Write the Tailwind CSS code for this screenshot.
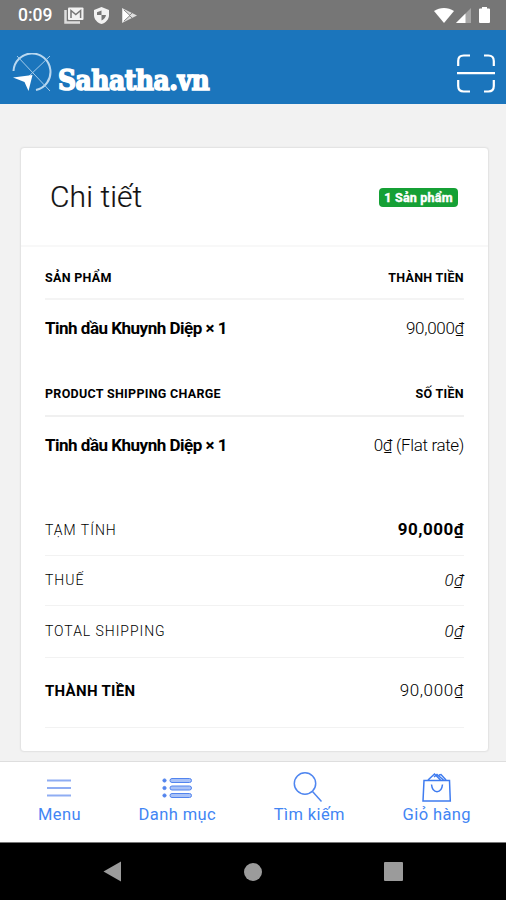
<!DOCTYPE html>
<html lang="vi">
<head>
    <meta charset="UTF-8">
    <meta name="viewport" content="width=device-width, initial-scale=1.0">
    <title>Sahatha.vn</title>
    <script src="https://cdn.jsdelivr.net/npm/@tailwindcss/browser@4"></script>
</head>
<body class="bg-[#f2f2f2] font-['Roboto',sans-serif] text-black h-[900px] flex flex-col overflow-hidden">
    <!-- Status bar -->
    <div class="h-[30px] shrink-0 bg-[#767676] flex items-center justify-between pl-[18px] pr-4 text-white">
        <div class="flex items-center">
            <span class="w-[34px] text-[17.5px] font-medium leading-none pt-[2px] whitespace-nowrap">0:09</span>
            <svg class="ml-3 w-5 h-[17px]" viewBox="0 0 20 17" fill="none">
                <path d="M1.5 3v12.5H16" stroke="#ddd" stroke-width="2.5"/>
                <rect x="4" y="0.5" width="15.5" height="12.5" rx="1" fill="#f2f2f2"/>
                <path d="M7 11V3.5l4.8 4 4.8-4V11" stroke="#767676" stroke-width="1.5"/>
            </svg>
            <svg class="ml-[10px] w-[15px] h-[17px]" viewBox="0 0 15 17">
                <path d="M7.5 0 15 3v5c0 4.300-3 7.700-7.500 9C3 15.700 0 12.300 0 8V3z" fill="#f2f2f2"/>
                <path d="M7.500 3.500V8H3V5.200zM7.500 8H12c-.3 2.500-2 4.500-4.500 5.500z" fill="#767676"/>
            </svg>
            <svg class="ml-[13px] w-[15px] h-[15px]" viewBox="0 0 15 15">
                <path d="M0 0 15 7.500 0 15z" fill="#ddd"/>
                <path d="M1 1.500 7.500 7.500 1 13.500z" fill="#fff"/>
                <path d="M2 2 8 7.500 2 13M10 5 7.500 7.500 10 10" stroke="#888" stroke-width="1" fill="none"/>
            </svg>
        </div>
        <div class="flex items-center">
            <svg class="w-5 h-[15px]" viewBox="0 0 20 15"><path d="M0 3C6-1 14-1 20 3L10 15z" fill="#fff"/></svg>
            <svg class="ml-[2px] w-[15px] h-[15px]" viewBox="0 0 15 15">
                <path d="M15 0v15H0z" fill="#a5a5a5"/>
                <path d="M9.500 5.500V15H0z" fill="#fff"/>
            </svg>
            <svg class="ml-2 w-[11px] h-4" viewBox="0 0 11 16"><path d="M3 0h5v1.500h2q1 0 1 1V15q0 1-1 1H1q-1 0-1-1V2.500q0-1 1-1h2z" fill="#fff"/></svg>
        </div>
    </div>

    <!-- Header -->
    <header class="h-[74px] shrink-0 bg-[#1b75bc] flex items-start justify-between pl-3 pr-[11px]">
        <div class="flex items-start text-white">
            <svg class="mt-[23px] w-10 h-[40px]" viewBox="0 0 40 40" fill="none">
                <path d="M1.500 18A18.500 18.500 0 1 1 24 37" stroke="#b9d8f0" stroke-width="2"/>
                <path d="M5 3 38 38M38 3 14 26" stroke="#a3cbea" stroke-width="1"/>
                <path d="M1 24.500 20.500 22 16.500 38 12.500 29z" fill="#fff"/>
            </svg>
            <!-- wordmark squeezed to a compact slab -->
            <span class="mt-[33px] ml-[6px] w-[152px] h-9 whitespace-nowrap font-['DejaVu_Serif',serif] font-bold text-[27px] leading-9 tracking-[-0.5px] origin-left scale-x-[0.925] [-webkit-text-stroke:1.6px_white]">Sahatha.vn</span>
        </div>
        <svg class="mt-6 w-[38px] h-[39px]" viewBox="0 0 38 39" fill="none" stroke="#fff" stroke-width="2.200">
            <path d="M1.200 12V7q0-5.500 5.500-5.500H13M27 1.500h4.300q5.500 0 5.500 5.500v5M36.800 26v6q0 5.500-5.500 5.500H27M13 37.500H6.700Q1.200 37.500 1.200 32v-6M0 19.200h38"/>
        </svg>
    </header>

    <!-- Order details -->
    <main class="grow pl-5 pr-[17px] pt-[43px]">
        <div class="h-[605px] bg-white border border-[#e4e4e4] rounded shadow-[0_0_2px_rgba(0,0,0,0.06)]">
            <div class="h-[99px] border-b-2 border-[#f8f8f8] flex items-center justify-between pl-[29px] pr-[30px]">
                <h1 class="text-[30px] font-light leading-10 tracking-[0.1px] text-[#111] [-webkit-text-stroke:0.2px_#111]">Chi tiết</h1>
                <span class="w-[79px] h-[19px] mt-[1px] rounded bg-[#15a035] text-white text-[12.5px] font-bold leading-[19px] text-center whitespace-nowrap tracking-[0.2px] [-webkit-text-stroke:0.4px_white]">1 Sản phẩm</span>
            </div>
            <div class="px-6">
                <div class="h-[53px] border-b-2 border-[#f4f4f4] flex items-center justify-between pt-[11px] text-[12.5px] font-bold">
                    <span class="tracking-[0.3px]">SẢN PHẨM</span>
                    <span class="tracking-[0.3px]">THÀNH TIỀN</span>
                </div>
                <div class="h-[58px] flex items-center justify-between text-[17px]">
                    <span class="font-bold tracking-[-0.5px]">Tinh dầu Khuynh Diệp × 1</span>
                    <span class="font-light tracking-[-0.3px]">90,000₫</span>
                </div>
                <div class="h-[59px] border-b-2 border-[#f0f0f0] flex items-center justify-between pt-[16px] text-[12.5px] font-bold">
                    <span class="tracking-[0.3px]">PRODUCT SHIPPING CHARGE</span>
                    <span class="tracking-[0.3px]">SỐ TIỀN</span>
                </div>
                <div class="h-[58px] flex items-center justify-between text-[17px]">
                    <span class="font-bold tracking-[-0.5px]">Tinh dầu Khuynh Diệp × 1</span>
                    <span class="font-light tracking-[-0.35px]">0₫ (Flat rate)</span>
                </div>
                <div class="mt-[30px] h-[51px] border-b border-[#f2f2f2] flex items-center justify-between">
                    <span class="text-[14px] font-light tracking-[1px] pt-[1px]">TẠM TÍNH</span>
                    <span class="text-[17px] font-bold tracking-[0.5px]">90,000₫</span>
                </div>
                <div class="h-[50px] border-b border-[#f2f2f2] flex items-center justify-between">
                    <span class="text-[14px] font-light tracking-[1px]">THUẾ</span>
                    <span class="text-[17px] font-light italic tracking-[0.5px]">0₫</span>
                </div>
                <div class="h-[52px] border-b border-[#f2f2f2] flex items-center justify-between">
                    <span class="text-[14px] font-light tracking-[0.95px]">TOTAL SHIPPING</span>
                    <span class="text-[17px] font-light italic tracking-[0.5px]">0₫</span>
                </div>
                <div class="h-[70px] border-b border-[#f2f2f2] flex items-center justify-between pb-[3px]">
                    <span class="text-[15px] font-bold tracking-[0.3px]">THÀNH TIỀN</span>
                    <span class="text-[17px] font-light tracking-[0.6px]">90,000₫</span>
                </div>
            </div>
        </div>
    </main>

    <!-- Bottom menu -->
    <nav class="h-[81px] shrink-0 bg-white border-t border-[#dedede] flex justify-between pl-[38px] pr-[35px] pt-[9px] text-[16.5px] leading-[22px] tracking-[0.4px] text-[#4285f4]">
        <a class="flex flex-col items-center">
            <svg class="w-8 h-[33px]" viewBox="0 0 32 33" stroke="#8fadf3" stroke-width="2"><path d="M4 9.500h24M4 17h24M4 24.500h24"/></svg>
            Menu
        </a>
        <a class="flex flex-col items-center">
            <svg class="w-8 h-[33px]" viewBox="0 0 32 33" fill="#a9c2f7" stroke="#5284ee" stroke-width="1">
                <rect x="9" y="7.500" width="21.500" height="4" rx="2"/>
                <rect x="9" y="15" width="21.500" height="4" rx="2"/>
                <rect x="9" y="22.500" width="21.500" height="4" rx="2"/>
                <circle cx="3.500" cy="9.500" r="1.600" fill="#5284ee"/>
                <circle cx="3.500" cy="17" r="1.600" fill="#5284ee"/>
                <circle cx="3.500" cy="24.500" r="1.600" fill="#5284ee"/>
            </svg>
            Danh mục
        </a>
        <a class="flex flex-col items-center">
            <svg class="w-8 h-[33px]" viewBox="0 0 32 33" fill="none" stroke="#4f86f0" stroke-width="1.500"><circle cx="12" cy="12.500" r="10.700"/><path d="M19.500 20.500 28.500 30.500"/></svg>
            Tìm kiếm
        </a>
        <a class="flex flex-col items-center">
            <svg class="w-8 h-[33px]" viewBox="0 0 32 33" fill="none" stroke="#3f7cf0" stroke-width="1.500">
                <path d="M3 9.500h25.500l.8 20.500H2zM7 9l6.500-6 6 6M13 6l3-2.500L22.500 9M18 4l2-.5L25 9M10.500 13.500c1 9.500 10 9.500 11 0"/>
            </svg>
            Giỏ hàng
        </a>
    </nav>

    <!-- Android navigation -->
    <div class="h-[58px] shrink-0 bg-black border-t border-[#777] flex items-center justify-between px-[103px] text-[#9b9b9b]">
        <svg class="w-[19px] h-[21px]" viewBox="0 0 19 21"><path d="M18 .5v20L.5 10.500z" fill="currentColor"/></svg>
        <div class="w-[18px] h-[18px] rounded-full bg-[#9b9b9b]"></div>
        <div class="w-[19px] h-[19px] rounded-[1px] bg-[#9b9b9b]"></div>
    </div>
</body>
</html>
